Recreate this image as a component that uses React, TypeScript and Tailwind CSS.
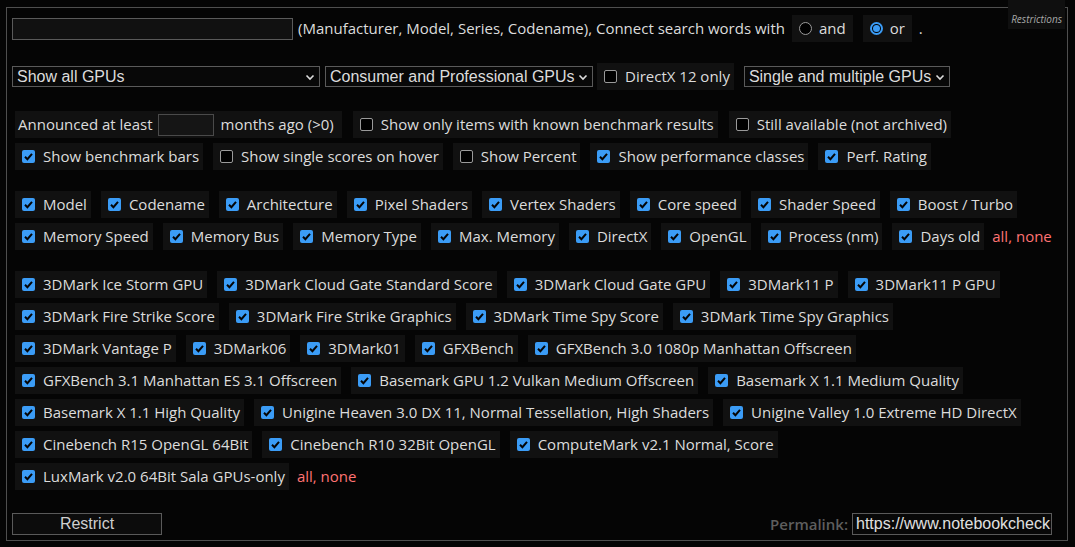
import React from 'react';

type Item = { label: string; checked?: boolean };

const Check = ({ checked }: { checked?: boolean }) =>
    checked ? (
        <span className="flex h-[13px] w-[13px] shrink-0 items-center justify-center rounded-[2px] bg-[#3b9cf6]">
            <svg viewBox="0 0 13 13" className="h-[13px] w-[13px]">
                <path d="M3 6.8 L5.4 9.2 L10 3.8" fill="none" stroke="#050505" strokeWidth="2" />
            </svg>
        </span>
    ) : (
        <span className="h-[13px] w-[13px] shrink-0 rounded-[2px] border border-[#9a9a9a] bg-black" />
    );

const Radio = ({ checked }: { checked?: boolean }) =>
    checked ? (
        <span className="flex h-[13px] w-[13px] shrink-0 items-center justify-center rounded-full border-2 border-[#3b9cf6] bg-black">
            <span className="h-[7px] w-[7px] rounded-full bg-[#3b9cf6]" />
        </span>
    ) : (
        <span className="h-[13px] w-[13px] shrink-0 rounded-full border border-[#9a9a9a] bg-black" />
    );

const Box = ({ label, checked }: Item) => (
    <label className="flex h-[27px] shrink-0 items-center gap-[8px] whitespace-nowrap bg-[#111] pl-[7px] pr-[4px]">
        <Check checked={checked} />
        <span>{label}</span>
    </label>
);

const Select = ({ label, width }: { label: string; width: string }) => (
    <div className={`flex h-[21px] items-center justify-between border border-[#5a5a5a] bg-[#080808] pl-[4px] pr-[4px] font-['Liberation_Sans',Arial,sans-serif] text-[16px] text-[#dcdcdc] ${width}`}>
        <span>{label}</span>
        <svg viewBox="0 0 10 10" className="h-[10px] w-[10px]">
            <path d="M1.5 3.5 L5 7 L8.5 3.5" fill="none" stroke="#dcdcdc" strokeWidth="1.6" />
        </svg>
    </div>
);

const columnRows: string[][] = [
    ['Model', 'Codename', 'Architecture', 'Pixel Shaders', 'Vertex Shaders', 'Core speed', 'Shader Speed', 'Boost / Turbo'],
    ['Memory Speed', 'Memory Bus', 'Memory Type', 'Max. Memory', 'DirectX', 'OpenGL', 'Process (nm)', 'Days old'],
];

const benchRows: string[][] = [
    ['3DMark Ice Storm GPU', '3DMark Cloud Gate Standard Score', '3DMark Cloud Gate GPU', '3DMark11 P', '3DMark11 P GPU'],
    ['3DMark Fire Strike Score', '3DMark Fire Strike Graphics', '3DMark Time Spy Score', '3DMark Time Spy Graphics'],
    ['3DMark Vantage P', '3DMark06', '3DMark01', 'GFXBench', 'GFXBench 3.0 1080p Manhattan Offscreen'],
    ['GFXBench 3.1 Manhattan ES 3.1 Offscreen', 'Basemark GPU 1.2 Vulkan Medium Offscreen', 'Basemark X 1.1 Medium Quality'],
    ['Basemark X 1.1 High Quality', 'Unigine Heaven 3.0 DX 11, Normal Tessellation, High Shaders', 'Unigine Valley 1.0 Extreme HD DirectX'],
    ['Cinebench R15 OpenGL 64Bit', 'Cinebench R10 32Bit OpenGL', 'ComputeMark v2.1 Normal, Score'],
    ['LuxMark v2.0 64Bit Sala GPUs-only'],
];

const AllNone = () => <span className="-ml-[2px] flex h-[27px] items-center whitespace-nowrap text-[#ff7373]">all, none</span>;

const Rows = ({ rows }: { rows: string[][] }) => (
    <div className="flex flex-col gap-[5px] pl-[3px]">
        {rows.map((row, i) => (
            <div key={i} className="flex gap-[10px]">
                {row.map((label) => (
                    <Box key={label} label={label} checked />
                ))}
                {i === rows.length - 1 && <AllNone />}
            </div>
        ))}
    </div>
);

export default function App() {
    return (
        <div className="min-h-[547px] w-[1075px] bg-[#050505] pt-[7px] pl-[6px] font-['Open_Sans','Noto_Sans',sans-serif] text-[15px] text-[#dcdcdc]">
            <div className="relative flex h-[534px] w-[1062px] flex-col border border-[#4f4f4f] pl-[5px] pt-[7px]">
                <div className="absolute -top-[8px] right-[2px] bg-[#0f0f0f] px-[3px] pt-[14px] pb-[5px] text-[10px] italic leading-none text-[#a8a8a8]">
                    Restrictions
                </div>

                {/* search */}
                <div className="flex h-[27px] items-center">
                    <div className="h-[22px] w-[281px] border border-[#5a5a5a] bg-[#111]" />
                    <span className="ml-[5px]">(Manufacturer, Model, Series, Codename), Connect search words with</span>
                    <label className="ml-[7px] flex h-[27px] items-center gap-[7px] bg-[#111] px-[7px]">
                        <Radio />
                        <span>and</span>
                    </label>
                    <label className="ml-[10px] flex h-[27px] items-center gap-[7px] bg-[#111] px-[7px]">
                        <Radio checked />
                        <span>or</span>
                    </label>
                    <span className="ml-[7px]">.</span>
                </div>

                {/* selects */}
                <div className="mt-[21px] flex h-[27px] items-center">
                    <Select label="Show all GPUs" width="w-[308px]" />
                    <div className="ml-[5px]">
                        <Select label="Consumer and Professional GPUs" width="w-[268px]" />
                    </div>
                    <div className="ml-[4px]">
                        <Box label="DirectX 12 only" />
                    </div>
                    <div className="ml-[10px]">
                        <Select label="Single and multiple GPUs" width="w-[206px]" />
                    </div>
                </div>

                {/* options */}
                <div className="mt-[21px] flex flex-col gap-[5px] pl-[3px]">
                    <div className="flex gap-[11px]">
                        <div className="flex h-[27px] items-center whitespace-nowrap bg-[#111] pl-[3px] pr-[8px]">
                            <span>Announced at least</span>
                            <div className="ml-[5px] mr-[7px] h-[22px] w-[56px] border border-[#4a4a4a] bg-[#151515]" />
                            <span>months ago (&gt;0)</span>
                        </div>
                        <Box label="Show only items with known benchmark results" />
                        <Box label="Still available (not archived)" />
                    </div>
                    <div className="flex gap-[10px]">
                        <Box label="Show benchmark bars" checked />
                        <Box label="Show single scores on hover" />
                        <Box label="Show Percent" />
                        <Box label="Show performance classes" checked />
                        <Box label="Perf. Rating" checked />
                    </div>
                </div>

                {/* columns */}
                <div className="mt-[21px]">
                    <Rows rows={columnRows} />
                </div>

                {/* benchmarks */}
                <div className="mt-[21px]">
                    <Rows rows={benchRows} />
                </div>

                {/* footer */}
                <div className="mt-[23px] flex items-center justify-between pr-[15px]">
                    <button className="h-[22px] w-[150px] border border-[#5a5a5a] bg-[#0c0c0c] font-['Liberation_Sans',Arial,sans-serif] text-[16px] leading-none text-[#cfcfcf]">
                        Restrict
                    </button>
                    <div className="flex items-center gap-[4px]">
                        <span className="font-semibold text-[#5e5e5e]">Permalink:</span>
                        <div className="flex h-[22px] w-[200px] items-center overflow-hidden whitespace-nowrap border border-[#5a5a5a] bg-[#080808] px-[3px] font-['Liberation_Sans',Arial,sans-serif] text-[16px] text-[#e0e0e0]">
                            https://www.notebookcheck.net/
                        </div>
                    </div>
                </div>
            </div>
        </div>
    );
}
